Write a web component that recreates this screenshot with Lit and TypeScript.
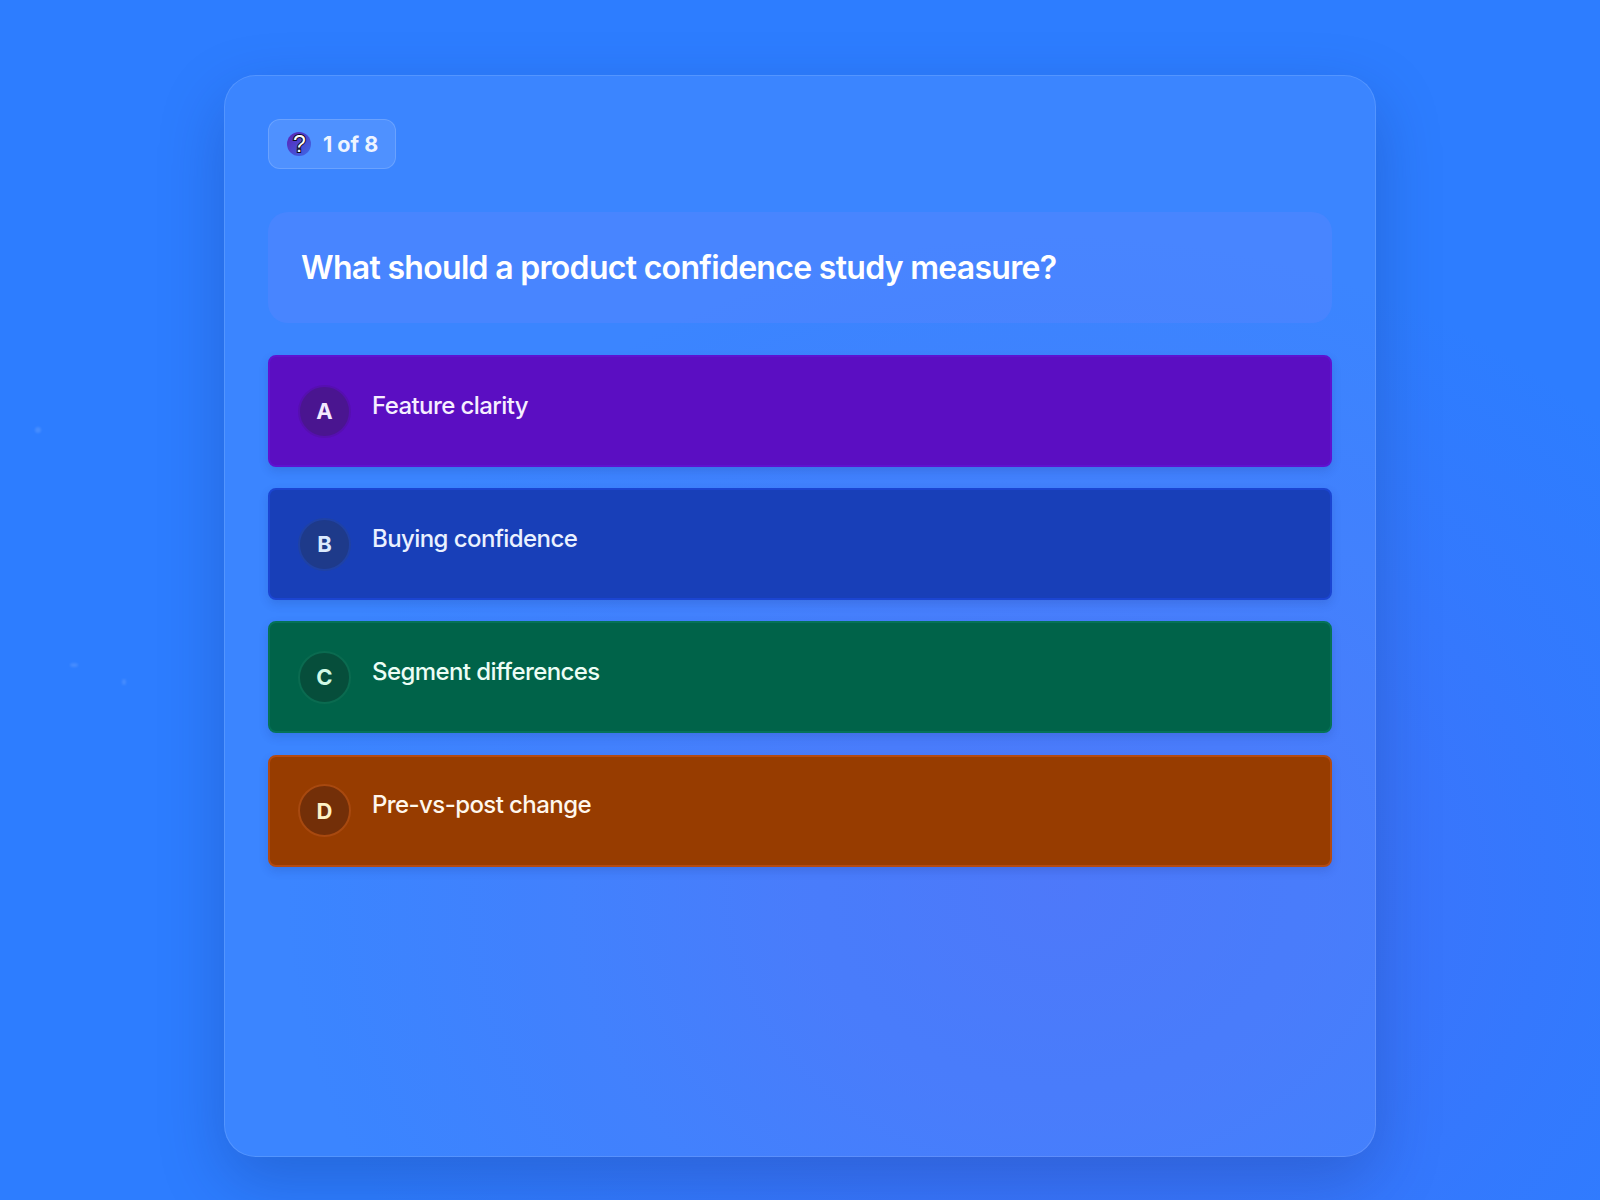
import { LitElement, html, css } from "lit";
import { customElement } from "lit/decorators.js";

const OPTIONS = [
  { k: "A", t: "Feature clarity", c: "a" },
  { k: "B", t: "Buying confidence", c: "b" },
  { k: "C", t: "Segment differences", c: "c" },
  { k: "D", t: "Pre-vs-post change", c: "d" },
];

@customElement("app-root")
export class AppRoot extends LitElement {
  static styles = css`
    :host {
      display: block;
      position: relative;
      width: 1600px;
      height: 1200px;
      overflow: hidden;
      font-family: Inter, "Liberation Sans", sans-serif;
      color: #fff;
      background:
        radial-gradient(ellipse 780px 660px at 1060px 890px, rgba(99, 90, 241, 0.38) 0, rgba(99, 90, 241, 0.27) 35%, rgba(99, 90, 241, 0.1) 72%, rgba(99, 90, 241, 0) 100%),
        #2d7dff;
    }
    .speck {
      position: absolute;
      border-radius: 50%;
      background: rgba(255, 255, 255, 0.12);
      filter: blur(1px);
    }
    .s1 { left: 35px; top: 427px; width: 6px; height: 6px; }
    .s2 { left: 70px; top: 663px; width: 8px; height: 4px; }
    .s3 { left: 122px; top: 679px; width: 4px; height: 6px; }
    .page {
      box-sizing: border-box;
      position: relative;
      height: 1200px;
      padding: 75px 224px 43px;
    }
    .card {
      box-sizing: border-box;
      height: 1082px;
      padding: 43px 43px;
      border-radius: 32px;
      border: 1px solid rgba(255, 255, 255, 0.13);
      background: rgba(255, 255, 255, 0.065);
      box-shadow: 0 24px 64px rgba(15, 40, 110, 0.26);
    }
    .pill {
      box-sizing: border-box;
      display: inline-flex;
      align-items: center;
      gap: 12px;
      height: 50px;
      width: 128px;
      padding: 0 16px 0 18px;
      border-radius: 12px;
      border: 1px solid rgba(255, 255, 255, 0.16);
      background: rgba(255, 255, 255, 0.1);
      font-size: 21.5px;
      font-weight: 700;
      color: #eef4ff;
      white-space: nowrap;
      vertical-align: top;
    }
    .pill svg { flex: none; display: block; }
    .pill svg text {
      font-family: "Liberation Sans", sans-serif;
      font-size: 23px;
      font-weight: 400;
      fill: #fff;
      stroke: #0b0b20;
      stroke-width: 2px;
      paint-order: stroke;
    }
    .question {
      box-sizing: border-box;
      height: 111px;
      margin-top: 43px;
      padding: 0 33px;
      display: flex;
      align-items: center;
      border-radius: 20px;
      background: rgba(135, 135, 255, 0.17);
      font-size: 32px;
      font-weight: 600;
      letter-spacing: -0.7px;
    }
    .options {
      display: flex;
      flex-direction: column;
      gap: 21.2px;
      margin-top: 32px;
    }
    .opt {
      box-sizing: border-box;
      height: 112px;
      display: flex;
      align-items: center;
      gap: 21px;
      padding: 0 28px;
      border-radius: 8px;
      border: 2px solid;
      box-shadow: 0 4px 10px rgba(20, 40, 110, 0.16);
      font-size: 24px;
    }
    .opt .label { position: relative; top: -6px; font-weight: 500; letter-spacing: -0.58px; }
    .badge {
      box-sizing: border-box;
      flex: none;
      width: 53px;
      height: 53px;
      border-radius: 50%;
      display: flex;
      align-items: center;
      justify-content: center;
      border: 2px solid;
      font-size: 22px;
      font-weight: 700;
    }
    .a { background: #5b0ec2; border-color: #5f12d0; color: #f6eeff; }
    .a .badge { background: #4a1590; border-color: #560fb0; color: #f3e8ff; }
    .b { background: #183fb8; border-color: #1b45d2; color: #eaf1ff; }
    .b .badge { background: #1e3a8a; border-color: #1f42a6; color: #dbeafe; }
    .c { background: #006349; border-color: #057258; color: #ecfdf5; }
    .c .badge { background: #064e3b; border-color: #0a6b50; color: #d1fae5; }
    .d { background: #973c00; border-color: #b34a12; color: #fff7ed; }
    .d .badge { background: #732f08; border-color: #a8490f; color: #fef3c7; }
  `;

  render() {
    return html`
      <i class="speck s1"></i><i class="speck s2"></i><i class="speck s3"></i>
      <div class="page">
        <div class="card">
          <div class="pill">
            <svg width="24" height="24" viewBox="0 0 24 24">
              <defs>
                <linearGradient id="qg" x1="0" y1="0" x2="1" y2="1">
                  <stop offset="0" stop-color="#5b21b6" />
                  <stop offset="1" stop-color="#3b6be8" />
                </linearGradient>
              </defs>
              <circle cx="12" cy="12" r="12" fill="url(#qg)" />
              <text x="12.5" y="20" text-anchor="middle">?</text>
            </svg>
            <span>1 of 8</span>
          </div>
          <div class="question">What should a product confidence study measure?</div>
          <div class="options">
            ${OPTIONS.map(
              (o) => html`
                <div class="opt ${o.c}">
                  <div class="badge">${o.k}</div>
                  <div class="label">${o.t}</div>
                </div>
              `
            )}
          </div>
        </div>
      </div>
    `;
  }
}
